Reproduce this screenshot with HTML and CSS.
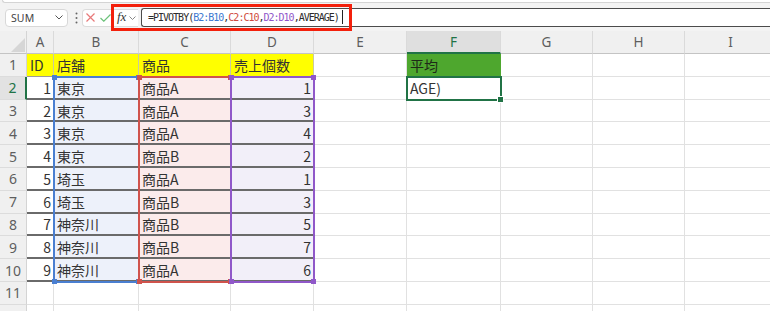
FILE: index.html
```html
<!DOCTYPE html>
<html lang="ja">
<head>
<meta charset="utf-8">
<title>PIVOTBY</title>
<link rel="stylesheet" href="styles.css">
</head>
<body>
<div class="app">
  <div class="ribbon"></div>
  <div class="fbar">
    <div class="namebox">
      <span class="nb-text">SUM</span>
      <svg class="nb-chev" width="8" height="5" viewBox="0 0 8 5"><path d="M0.5 0.5 L4 4 L7.5 0.5" fill="none" stroke="#555" stroke-width="1"/></svg>
    </div>
    <svg class="dots" width="3" height="12" viewBox="0 0 3 12"><circle cx="1.5" cy="1.5" r="1" fill="#666"/><circle cx="1.5" cy="6" r="1" fill="#666"/><circle cx="1.5" cy="10.5" r="1" fill="#666"/></svg>
    <div class="fxgroup">
      <svg class="ic-x" width="9" height="9" viewBox="0 0 9 9"><path d="M0.5 0.5 L8.5 8.5 M8.5 0.5 L0.5 8.5" stroke="#e8797a" stroke-width="1.2" fill="none"/></svg>
      <svg class="ic-ok" width="11" height="8" viewBox="0 0 11 8"><path d="M0.5 4 L3.8 7.2 L10.5 0.5" stroke="#6cc27a" stroke-width="1.2" fill="none"/></svg>
      <span class="fx">fx</span>
      <svg class="fx-chev" width="7" height="4" viewBox="0 0 7 4"><path d="M0.5 0.5 L3.5 3.5 L6.5 0.5" fill="none" stroke="#888" stroke-width="1"/></svg>
    </div>
    <div class="formula"><span class="ftext">=PIVOTBY(<span class="rb">B2:B10</span>,<span class="rc">C2:C10</span>,<span class="rd">D2:D10</span>,AVERAGE)</span><span class="caret"></span></div>
    <div class="annot"></div>
  </div>
  <div class="sheet">
    <div class="grid">
      <div class="corner"><svg width="14" height="14" viewBox="0 0 14 14"><path d="M14 0 L14 14 L0 14 Z" fill="#d6d6d6"/></svg></div>
      <div class="hd">A</div><div class="hd">B</div><div class="hd">C</div><div class="hd">D</div><div class="hd">E</div><div class="hd sel">F</div><div class="hd">G</div><div class="hd">H</div><div class="hd">I</div>

      <div class="rh">1</div>
      <div class="c y">ID</div><div class="c y">店舗</div><div class="c y">商品</div><div class="c y">売上個数</div><div class="c"></div><div class="c g">平均</div><div class="c"></div><div class="c"></div><div class="c"></div>

      <div class="rh sel">2</div>
      <div class="c a n">1</div><div class="c b">東京</div><div class="c p">商品A</div><div class="c d n">1</div><div class="c"></div><div class="c">AGE)</div><div class="c"></div><div class="c"></div><div class="c"></div>

      <div class="rh">3</div>
      <div class="c a n">2</div><div class="c b">東京</div><div class="c p">商品A</div><div class="c d n">3</div><div class="c"></div><div class="c"></div><div class="c"></div><div class="c"></div><div class="c"></div>

      <div class="rh">4</div>
      <div class="c a n">3</div><div class="c b">東京</div><div class="c p">商品A</div><div class="c d n">4</div><div class="c"></div><div class="c"></div><div class="c"></div><div class="c"></div><div class="c"></div>

      <div class="rh">5</div>
      <div class="c a n">4</div><div class="c b">東京</div><div class="c p">商品B</div><div class="c d n">2</div><div class="c"></div><div class="c"></div><div class="c"></div><div class="c"></div><div class="c"></div>

      <div class="rh">6</div>
      <div class="c a n">5</div><div class="c b">埼玉</div><div class="c p">商品A</div><div class="c d n">1</div><div class="c"></div><div class="c"></div><div class="c"></div><div class="c"></div><div class="c"></div>

      <div class="rh">7</div>
      <div class="c a n">6</div><div class="c b">埼玉</div><div class="c p">商品B</div><div class="c d n">3</div><div class="c"></div><div class="c"></div><div class="c"></div><div class="c"></div><div class="c"></div>

      <div class="rh">8</div>
      <div class="c a n">7</div><div class="c b">神奈川</div><div class="c p">商品B</div><div class="c d n">5</div><div class="c"></div><div class="c"></div><div class="c"></div><div class="c"></div><div class="c"></div>

      <div class="rh">9</div>
      <div class="c a n">8</div><div class="c b">神奈川</div><div class="c p">商品B</div><div class="c d n">7</div><div class="c"></div><div class="c"></div><div class="c"></div><div class="c"></div><div class="c"></div>

      <div class="rh">10</div>
      <div class="c a n">9</div><div class="c b">神奈川</div><div class="c p">商品A</div><div class="c d n">6</div><div class="c"></div><div class="c"></div><div class="c"></div><div class="c"></div><div class="c"></div>

      <div class="rh">11</div>
      <div class="c"></div><div class="c"></div><div class="c"></div><div class="c"></div><div class="c"></div><div class="c"></div><div class="c"></div><div class="c"></div><div class="c"></div>

      <div class="rh"></div>
      <div class="c"></div><div class="c"></div><div class="c"></div><div class="c"></div><div class="c"></div><div class="c"></div><div class="c"></div><div class="c"></div><div class="c"></div>
    </div>
    <div class="overlay">
      <div class="rng rng-b"><i class="h tl"></i><i class="h tr"></i><i class="h bl"></i><i class="h br"></i></div>
      <div class="rng rng-c"><i class="h tl"></i><i class="h tr"></i><i class="h bl"></i><i class="h br"></i></div>
      <div class="rng rng-d"><i class="h tl"></i><i class="h tr"></i><i class="h bl"></i><i class="h br"></i></div>
      <div class="act"><i class="fill"></i></div>
    </div>
  </div>
</div>
</body>
</html>
```
FILE: styles.css
```css
html, body {
  margin: 0;
  padding: 0;
}
body {
  width: 770px;
  height: 311px;
  overflow: hidden;
  background: #f3f3f3;
  font-family: "Noto Sans", "Liberation Sans", sans-serif;
}
.app {
  width: 770px;
  height: 311px;
  overflow: hidden;
}
.ribbon {
  height: 2px;
  margin-left: 2px;
  background: #ffffff;
  border-bottom: 1px solid #d4d4d4;
  border-left: 1px solid #d4d4d4;
  border-radius: 0 0 0 5px;
}
.fbar {
  position: relative;
  height: 28px;
  display: flex;
  align-items: center;
}
.namebox {
  margin-left: 5px;
  width: 63px;
  height: 18px;
  box-sizing: border-box;
  background: #fff;
  border: 1px solid #d8d8d8;
  border-radius: 4px;
  display: flex;
  align-items: center;
  justify-content: space-between;
  padding: 0 4px 0 5px;
  margin-top: 1px;
}
.nb-text {
  font-size: 10.5px;
  color: #444;
  letter-spacing: 0.1px;
}
.nb-chev {
  display: block;
}
.dots {
  display: block;
  margin-left: 7px;
  margin-top: 1px;
}
.fxgroup {
  margin-left: 4px;
  width: 56px;
  height: 18px;
  margin-top: 1px;
  box-sizing: border-box;
  background: #fff;
  border: 1px solid #dcdcdc;
  border-right: none;
  border-radius: 4px 0 0 4px;
  display: flex;
  align-items: center;
}
.ic-x {
  display: block;
  margin-left: 3px;
}
.ic-ok {
  display: block;
  margin-left: 5px;
}
.fx {
  margin-left: 6px;
  font-family: "Liberation Serif", serif;
  font-style: italic;
  font-size: 13px;
  color: #333;
  line-height: 1;
  margin-top: -2px;
}
.fx-chev {
  display: block;
  margin-left: 3px;
}
.formula {
  flex: 1;
  margin-left: 3px;
  height: 19px;
  box-sizing: border-box;
  background: #fff;
  border: 1px solid #4b4b4b;
  border-right: none;
  border-radius: 3px 0 0 3px;
  display: flex;
  align-items: center;
  padding-left: 6px;
}
.ftext {
  font-family: "DejaVu Sans Mono", "Liberation Mono", monospace;
  font-size: 10px;
  letter-spacing: -1px;
  color: #2b2b2b;
  white-space: nowrap;
}
.rb { color: #3b78d0; }
.rc { color: #cf4a40; }
.rd { color: #8f55c9; }
.caret {
  display: block;
  width: 1px;
  height: 14px;
  background: #222;
  margin-left: 3px;
}
.annot {
  position: absolute;
  left: 111px;
  top: 1px;
  width: 241px;
  height: 27px;
  box-sizing: border-box;
  border: 3px solid #f3200c;
  pointer-events: none;
}

/* sheet */
.sheet {
  position: relative;
  background: #fff;
}
.grid, .overlay {
  display: grid;
  grid-template-columns: 27px 27px 85px 92px 83px 93px 94px 92px 92px 92px;
  grid-template-rows: 23px repeat(12, 22.8px);
}
.overlay {
  position: absolute;
  left: 0;
  top: 0;
  pointer-events: none;
}
.corner {
  background: #f0f0f0;
  border-right: 1px solid #d4d4d4;
  border-bottom: 1px solid #c4c4c4;
  box-sizing: border-box;
  display: flex;
  align-items: flex-end;
  justify-content: flex-end;
  padding: 0 1px 1px 0;
}
.corner svg { display: block; }
.hd {
  background: #f0f0f0;
  border-right: 1px solid #dadada;
  border-bottom: 1px solid #c4c4c4;
  box-sizing: border-box;
  display: flex;
  align-items: center;
  justify-content: center;
  font-size: 13.5px;
  color: #5e5e5e;
}
.hd.sel {
  background: #dfdfdf;
  color: #217346;
  border-bottom: 2px solid #217346;
}
.rh {
  background: #f0f0f0;
  border-right: 1px solid #d4d4d4;
  border-bottom: 1px solid #dcdcdc;
  box-sizing: border-box;
  display: flex;
  align-items: center;
  justify-content: center;
  font-size: 14px;
  color: #5e5e5e;
}
.rh.sel {
  background: #e2e2e2;
  color: #217346;
  border-right: 2px solid #217346;
}
.c {
  border-right: 1px solid #e1e1e1;
  border-bottom: 1px solid #e1e1e1;
  box-sizing: border-box;
  display: flex;
  align-items: center;
  padding: 1px 3px 0;
  font-family: "Noto Sans CJK JP", "Noto Sans", sans-serif;
  font-size: 14px;
  color: #333;
  white-space: nowrap;
  overflow: hidden;
}
.c.n {
  justify-content: flex-end;
  padding-right: 2px;
}
.c.y {
  background: #ffff00;
  border-right-color: #c9c9a0;
  border-bottom: 1px solid #9a9a9a;
}
.c.g {
  background: #4ea72e;
  color: #1e2a18;
  border-right-color: #4ea72e;
}
.c.a {
  border-bottom: 2px solid #6a6a6a;
}
.c.b {
  background: #edf1fa;
  border-bottom: 2px solid #6a6a6a;
}
.c.p {
  background: #fbebeb;
  border-bottom: 2px solid #6a6a6a;
}
.c.d {
  background: #f2eff9;
  border-bottom: 2px solid #6a6a6a;
}

/* range highlights */
.rng {
  position: relative;
  grid-row: 3 / 12;
  margin: -1px;
  border: 2px solid;
}
.rng-b { grid-column: 3; color: #4a7fd1; border-color: #4a7fd1; }
.rng-c { grid-column: 4; color: #d0534c; border-color: #d0534c; }
.rng-d { grid-column: 5; color: #9058c9; border-color: #9058c9; }
.h {
  position: absolute;
  width: 5px;
  height: 5px;
  background: currentColor;
}
.h.tl { left: -3px; top: -3px; }
.h.tr { right: -3px; top: -3px; }
.h.bl { left: -3px; bottom: -3px; }
.h.br { right: -3px; bottom: -3px; }
.act {
  position: relative;
  grid-column: 7;
  grid-row: 3;
  margin: -1px;
  border: 2px solid #217346;
}
.fill {
  position: absolute;
  right: -4px;
  bottom: -4px;
  width: 5px;
  height: 5px;
  background: #217346;
  border: 1px solid #fff;
}
```
